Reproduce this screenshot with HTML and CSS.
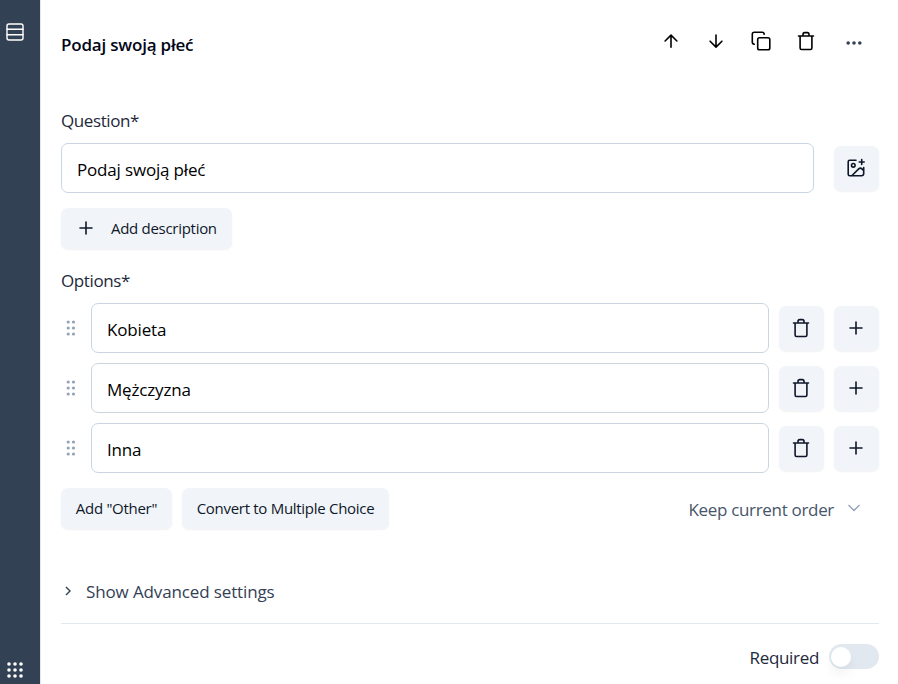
FILE: index.html
```html
<!DOCTYPE html>
<html lang="en">
<head>
<meta charset="utf-8">
<title>Question editor</title>
<link rel="stylesheet" href="styles.css">
</head>
<body>
<svg class="sprite" aria-hidden="true">
  <symbol id="trash" viewBox="0 0 20 20"><path d="M2.500 5h15M4.100 5v12.100q0 1.400 1.400 1.400h9q1.400 0 1.400-1.400V5M7 5V3.300q0-1.700 1.700-1.700h2.600q1.700 0 1.700 1.700V5"/></symbol>
  <symbol id="plus" viewBox="0 0 20 20"><path d="M4 10h12M10 4v12"/></symbol>
  <symbol id="grip" viewBox="0 0 10 16"><circle cx="2.200" cy="2" r="1.600"/><circle cx="7.500" cy="2" r="1.600"/><circle cx="2.200" cy="8" r="1.600"/><circle cx="7.500" cy="8" r="1.600"/><circle cx="2.200" cy="14" r="1.600"/><circle cx="7.500" cy="14" r="1.600"/></symbol>
</svg>
<div class="layout">
  <aside class="rail">
    <svg class="icon" viewBox="0 0 20 20"><rect x="2" y="2" width="16" height="16" rx="2"/><path d="M2 7.300h16M2 12.700h16"/></svg>
    <svg class="dots" viewBox="0 0 16 16"><circle cx="2" cy="2" r="1.800"/><circle cx="8" cy="2" r="1.800"/><circle cx="14" cy="2" r="1.800"/><circle cx="2" cy="8" r="1.800"/><circle cx="8" cy="8" r="1.800"/><circle cx="14" cy="8" r="1.800"/><circle cx="2" cy="14" r="1.800"/><circle cx="8" cy="14" r="1.800"/><circle cx="14" cy="14" r="1.800"/></svg>
  </aside>
  <main class="card">
    <header class="header">
      <h1 class="title">Podaj swoją płeć</h1>
      <div class="tools">
        <svg class="icon" viewBox="0 0 20 20"><path d="M10 16.200V4.200M4.100 10 10 4.100l5.900 5.900"/></svg>
        <svg class="icon" viewBox="0 0 20 20"><path d="M10 4v12M4.100 10.200l5.900 5.900 5.900-5.900"/></svg>
        <svg class="icon" viewBox="0 0 20 20"><rect x="6.700" y="6.700" width="12.100" height="12.100" rx="1.800"/><path d="M3.300 13.200Q1.300 13 1.300 11.300V3.200q0-1.900 1.900-1.900h8.100q1.700 0 1.900 2"/></svg>
        <svg class="icon"><use href="#trash"/></svg>
        <svg class="icon more" viewBox="0 0 20 20"><circle cx="4.200" cy="10" r="1.800"/><circle cx="10" cy="10" r="1.800"/><circle cx="15.800" cy="10" r="1.800"/></svg>
      </div>
    </header>

    <div class="label">Question*</div>
    <div class="question-row">
      <div class="field"><span>Podaj swoją płeć</span></div>
      <button class="square"><svg class="icon" viewBox="0 0 20 20"><path d="M10 2.200H3.700Q2.200 2.200 2.200 3.700v12.600q0 1.500 1.500 1.500h11.800q2.200 0 2.200-2.200V9.500M15.700 1.500v5M13.200 4h5M5.800 17.800l6.900-6.900q1.600-1.500 3.200 0l1.800 1.800"/><circle cx="7.300" cy="7.300" r="1.800"/></svg></button>
    </div>
    <button class="button describe"><svg class="icon"><use href="#plus"/></svg><span>Add description</span></button>

    <div class="label options-label">Options*</div>
    <div class="options">
      <div class="option"><svg class="grip"><use href="#grip"/></svg><div class="field"><span>Kobieta</span></div><button class="square"><svg class="icon"><use href="#trash"/></svg></button><button class="square"><svg class="icon"><use href="#plus"/></svg></button></div>
      <div class="option"><svg class="grip"><use href="#grip"/></svg><div class="field"><span>Mężczyzna</span></div><button class="square"><svg class="icon"><use href="#trash"/></svg></button><button class="square"><svg class="icon"><use href="#plus"/></svg></button></div>
      <div class="option"><svg class="grip"><use href="#grip"/></svg><div class="field"><span>Inna</span></div><button class="square"><svg class="icon"><use href="#trash"/></svg></button><button class="square"><svg class="icon"><use href="#plus"/></svg></button></div>
    </div>

    <div class="actions">
      <button class="button other">Add "Other"</button>
      <button class="button convert">Convert to Multiple Choice</button>
      <div class="order"><span>Keep current order</span><svg class="chevron" viewBox="0 0 12 8"><path d="m.5 1 5.500 5.500L11.500 1"/></svg></div>
    </div>

    <div class="advanced"><svg class="caret" viewBox="0 0 6 10"><path d="m1 1 4 4-4 4"/></svg><span>Show Advanced settings</span></div>
    <footer class="footer"><span class="required">Required</span><span class="toggle"><span class="knob"></span></span></footer>
  </main>
</div>
</body>
</html>
```
FILE: styles.css
```css
* { box-sizing: border-box; }
body { margin: 0; background: #fff; font: 17px/24px "Open Sans", "Noto Sans", sans-serif; color: #1e293b; }
.sprite { display: none; }
.layout { display: flex; height: 684px; overflow: hidden; }
.rail { width: 41px; padding: 22px 16px 6px 5px; background: #334155; border-right: 1px solid #e2e8f0; display: flex; flex-direction: column; justify-content: space-between; }
.icon { display: block; width: 20px; height: 20px; flex: none; fill: none; stroke: currentColor; stroke-width: 1.6; stroke-linecap: round; stroke-linejoin: round; }
.rail .icon { color: #fff; stroke-width: 1.4; }
.dots { width: 16px; height: 16px; margin-left: 2px; fill: #fff; }
.card { flex: 1; padding: 0 19px 0 20px; }
.header { display: flex; justify-content: space-between; height: 109px; padding-top: 31px; }
.title { margin: 2px 0 0; font-size: 17px; line-height: 24px; font-weight: 600; letter-spacing: -.2px; color: #020617; }
.tools { display: flex; gap: 25px; color: #000; margin-right: 15px; }
.more { margin: 2px 0 0 3px; fill: #334155; stroke: none; }
.label { height: 34px; letter-spacing: -.4px; }
.question-row { display: flex; gap: 20px; height: 50px; }
.field { flex: 1; height: 50px; padding: 14px 15px 0; border: 1px solid #cbd5e1; border-radius: 7px; line-height: 24px; color: #000; letter-spacing: -.17px; }
.square { width: 45px; height: 45px; margin: 3px 0 0; padding: 0 1px 1px 0; border: 0; border-radius: 7px; background: #f1f5f9; color: #0f172a; display: flex; justify-content: center; align-items: center; box-shadow: 0 1px 2px rgba(0, 0, 0, .06); }
.button { height: 41px; padding: 0 0 2px; border: 0; border-radius: 7px; background: #f1f5f9; color: #0f172a; font: 15px/20px "Open Sans", "Noto Sans", sans-serif; letter-spacing: -.29px; box-shadow: 0 1px 2px rgba(0, 0, 0, .06); white-space: nowrap; }
.describe { width: 171px; margin-top: 15px; padding-left: 15px; display: flex; align-items: center; gap: 15px; }
.options-label { margin-top: 20px; }
.options { display: grid; gap: 10px; }
.option { display: flex; gap: 10px; }
.grip { width: 10px; height: 16px; margin: 17px 5px 0; fill: #94a3b8; }
.actions { display: flex; gap: 10px; margin-top: 15px; }
.other { width: 111px; }
.convert { width: 207px; }
.order { display: flex; margin: 10px 19px 0 auto; gap: 14px; color: #475569; letter-spacing: -.32px; }
.chevron { width: 12px; height: 8px; margin-top: 6px; fill: none; stroke: #94a3b8; stroke-width: 1.4; }
.advanced { display: flex; height: 95px; padding: 51px 0 0 4px; gap: 15px; border-bottom: 1px solid #e2e8f0; color: #334155; letter-spacing: -.13px; }
.caret { width: 6px; height: 10px; margin-top: 6px; fill: none; stroke: #334155; stroke-width: 1.4; }
.footer { display: flex; justify-content: flex-end; gap: 10px; padding-top: 20px; }
.required { margin-top: 2px; letter-spacing: -.32px; }
.toggle { width: 50px; height: 25px; padding: 2.5px 2px; border-radius: 13px; background: #e2e8f0; }
.knob { display: block; width: 20px; height: 20px; border-radius: 50%; background: #fff; box-shadow: 0 8px 12px rgba(0, 0, 0, .05); }
```
